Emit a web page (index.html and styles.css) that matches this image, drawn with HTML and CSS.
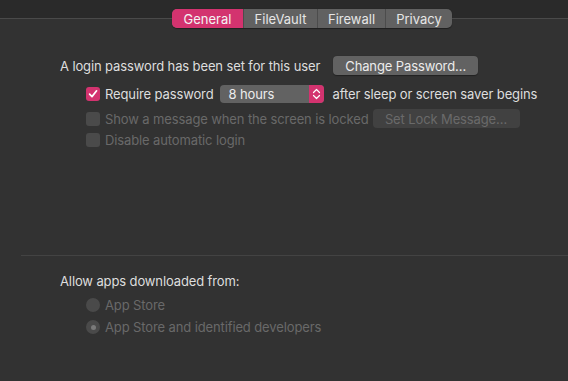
FILE: index.html
```html
<!DOCTYPE html>
<html lang="en">
<head>
<meta charset="utf-8">
<title>Security &amp; Privacy</title>
<link rel="stylesheet" href="styles.css">
</head>
<body>
<div class="tabs">
  <div class="tab active">General</div>
  <div class="tab">FileVault</div>
  <div class="tab">Firewall</div>
  <div class="tab">Privacy</div>
</div>

<section class="top">
  <div class="row r1">
    <span class="label">A login password has been set for this user</span>
    <div class="btn change">Change Password…</div>
  </div>
  <div class="row r2 indent">
    <span class="check on"><svg width="10" height="10" viewBox="0 0 10 10"><path d="M1.6 5.2 L4 7.6 L8.6 1.8" fill="none" stroke="#fff" stroke-width="1.7" stroke-linecap="round" stroke-linejoin="round"/></svg></span>
    <span class="label">Require password</span>
    <div class="popup">
      <span class="popup-value">8 hours</span>
      <span class="stepper"><svg width="9" height="12" viewBox="0 0 9 12"><path d="M1.5 4.5 L4.5 1.5 L7.5 4.5 M1.5 7.5 L4.5 10.5 L7.5 7.5" fill="none" stroke="#fff" stroke-width="1.2" stroke-linecap="round" stroke-linejoin="round"/></svg></span>
    </div>
    <span class="label">after sleep or screen saver begins</span>
  </div>
  <div class="row r3 indent disabled">
    <span class="check"></span>
    <span class="label">Show a message when the screen is locked</span>
    <div class="btn lock">Set Lock Message…</div>
  </div>
  <div class="row r4 indent disabled">
    <span class="check"></span>
    <span class="label">Disable automatic login</span>
  </div>
</section>

<hr class="sep">

<section class="bottom">
  <div class="row heading"><span class="label">Allow apps downloaded from:</span></div>
  <div class="row radio-row first indent disabled">
    <span class="radio"></span>
    <span class="label">App Store</span>
  </div>
  <div class="row radio-row indent disabled">
    <span class="radio sel"></span>
    <span class="label">App Store and identified developers</span>
  </div>
</section>
</body>
</html>
```

FILE: styles.css
```css
html, body {
  margin: 0;
  padding: 0;
}
body {
  width: 568px;
  height: 381px;
  overflow: hidden;
  background: linear-gradient(#2a2a2a 0 18px, #4a4a4a 18px 19px, #323232 19px);
  font-family: Inter, "Noto Sans", sans-serif;
  font-size: 13px;
  letter-spacing: -0.12px;
  color: #dedede;
}
.tabs {
  display: flex;
  margin: 9px 0 0 172px;
  width: 280px;
  height: 19px;
  border-radius: 5px;
  overflow: hidden;
  background: #616161;
  box-shadow: 0 0.5px 1px rgba(0,0,0,0.4);
}
.tab {
  display: flex;
  align-items: center;
  justify-content: center;
  color: #e6e6e6;
  border-left: 1px solid #4c4c4c;
  letter-spacing: 0;
}
.tab:nth-child(1) { width: 71px; border-left: 0; }
.tab:nth-child(2) { width: 73px; }
.tab:nth-child(3) { width: 67px; }
.tab:nth-child(4) { flex: 1; }
.tab.active {
  background: #d3336f;
  color: #f4f4f4;
}
.top {
  display: flex;
  flex-direction: column;
  padding: 28px 0 0 60px;
}
.row {
  display: flex;
  align-items: center;
  white-space: nowrap;
}
.r1 { height: 19px; gap: 13px; }
.r2 { height: 19px; margin-top: 9px; }
.r3 { height: 19px; margin-top: 6px; }
.r4 { height: 14px; margin-top: 5px; }
.indent { padding-left: 26px; }
.check {
  width: 14px;
  height: 14px;
  border-radius: 3px;
  background: #4a4a4a;
  margin-right: 5px;
  flex: none;
  display: flex;
  align-items: center;
  justify-content: center;
}
.check.on { background: #d3336f; }
.popup {
  display: flex;
  width: 104px;
  height: 18px;
  margin: 0 9px 0 6px;
  border-radius: 4px;
  overflow: hidden;
  background: #626262;
}
.popup-value {
  flex: 1;
  padding-left: 9px;
  display: flex;
  align-items: center;
  color: #ececec;
}
.stepper {
  width: 15px;
  background: #d3336f;
  display: flex;
  align-items: center;
  justify-content: center;
}
.btn {
  height: 19px;
  border-radius: 4px;
  display: flex;
  align-items: center;
  justify-content: center;
  flex: none;
}
.change {
  width: 145px;
  background: #626262;
  color: #ececec;
  box-shadow: 0 0.5px 1px rgba(0,0,0,0.35);
}
.lock {
  width: 147px;
  margin-left: 4px;
  background: #414141;
  color: #6a6a6a;
}
.disabled .label { color: #696969; }
.sep {
  margin: 108px 0 0 21px;
  border: 0;
  height: 1px;
  background: #434343;
}
.bottom {
  display: flex;
  flex-direction: column;
  padding: 17px 0 0 60px;
}
.heading { height: 16px; }
.radio-row { height: 16px; margin-top: 6px; }
.radio-row.first { margin-top: 8px; }
.radio {
  width: 14px;
  height: 14px;
  border-radius: 50%;
  background: #4a4a4a;
  margin-right: 5px;
  flex: none;
  display: flex;
  align-items: center;
  justify-content: center;
}
.radio.sel::after {
  content: "";
  width: 5px;
  height: 5px;
  border-radius: 50%;
  background: #7a7a7a;
}
```
